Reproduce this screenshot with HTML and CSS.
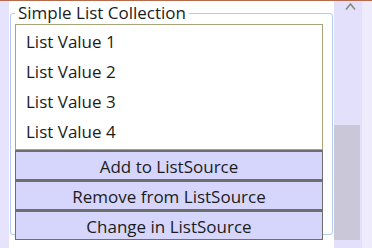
FILE: index.html
```html
<!DOCTYPE html>
<html lang="en">
<head>
    <meta charset="UTF-8">
    <title>Simple List Collection</title>
    <link rel="stylesheet" href="styles.css">
</head>
<body>
    <div class="window">
        <div class="edge"></div>
        <fieldset class="group">
            <legend>Simple List Collection</legend>
            <ul class="list">
                <li>List Value 1</li>
                <li>List Value 2</li>
                <li>List Value 3</li>
                <li>List Value 4</li>
            </ul>
            <button class="action">Add to ListSource</button>
            <button class="action">Remove from ListSource</button>
            <button class="action">Change in ListSource</button>
        </fieldset>
        <div class="scrollbar">
            <svg class="arrow" width="11" height="8" viewBox="0 0 11 8">
                <path d="M1 7.5 L5.5 2 L10 7.5" fill="none" stroke="#8c8a72" stroke-width="1.6"/>
            </svg>
            <div class="thumb"></div>
        </div>
    </div>
</body>
</html>
```

FILE: styles.css
```css
body {
    margin: 0;
    padding: 0;
    background: #ffffff;
    font-family: "Open Sans", Arial, sans-serif;
    color: #1c1c1c;
}
.window {
    display: flex;
    height: 247px;
    border-top: 1px solid #b86a4c;
}
.edge {
    width: 9px;
    background: #e6e4fc;
}
.group {
    margin: 2px 0 0 1px;
    padding: 1px 9px 7px 4px;
    width: 308px;
    height: 222px;
    border: 1px solid #b4cbf0;
    border-radius: 3px;
}
.group legend {
    padding: 0 3px;
    font-size: 17px;
    line-height: 20px;
}
.list {
    list-style: none;
    margin: 0;
    padding: 2px 0 0;
    border: 1px solid #a8a47a;
    height: 122px;
}
.list li {
    padding-left: 10px;
    font-size: 17px;
    line-height: 30px;
}
.action {
    display: block;
    width: 100%;
    height: 30px;
    margin: 0;
    padding: 1px 0 0;
    border: 1px solid #6e6e6e;
    border-top-width: 2px;
    background: #d6d6fc;
    font-family: "Open Sans", Arial, sans-serif;
    font-size: 17px;
    color: #1c1c1c;
}
.scrollbar {
    flex: 1;
    margin-left: 1px;
    display: flex;
    flex-direction: column;
    align-items: flex-start;
    background: linear-gradient(to right, #e2e0fa 0 28px, #eeecfc 28px);
}
.arrow {
    margin: 1px 0 0 11px;
}
.thumb {
    margin-top: 115px;
    width: 26px;
    height: 115px;
    background: #c9c7d8;
}
```
